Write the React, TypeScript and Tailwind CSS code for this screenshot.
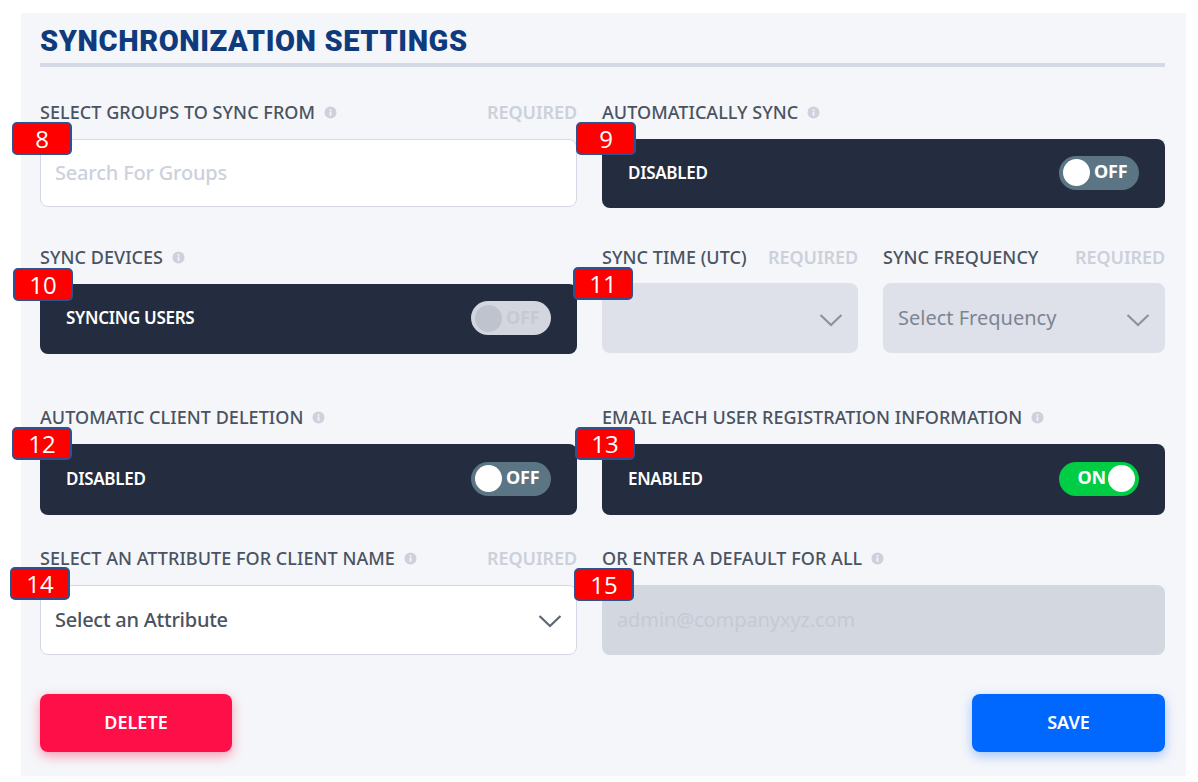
import type { ReactNode } from 'react';

function InfoIcon() {
    return (
        <svg width="13" height="13" viewBox="0 0 13 13" className="shrink-0">
            <circle cx="6.5" cy="6.5" r="6" fill="#ccd1dc" />
            <rect x="5.6" y="5.6" width="1.8" height="4.2" fill="#f5f6fa" />
            <rect x="5.6" y="3.1" width="1.8" height="1.6" fill="#f5f6fa" />
        </svg>
    );
}

function Chevron({ color, className }: { color: string; className?: string }) {
    return (
        <svg width="24" height="14" viewBox="0 0 24 14" fill="none" className={`shrink-0 ${className ?? ''}`}>
            <path d="M1.5 2L12 12L22.5 2" stroke={color} strokeWidth="2.2" />
        </svg>
    );
}

function Badge({ n, className }: { n: number; className: string }) {
    return (
        <div className={`absolute z-10 flex h-[33px] w-[60px] items-center justify-center rounded-[5px] border-2 border-[#2f528f] bg-[#ff0000] font-['Open_Sans',sans-serif] text-[24px] leading-none text-white ${className}`}>
            {n}
        </div>
    );
}

function FieldLabel({ text, info, required }: { text: string; info?: boolean; required?: boolean }) {
    return (
        <div className="flex h-[26px] items-center justify-between whitespace-nowrap text-[18px] font-medium tracking-[0.05px]">
            <div className="flex items-center gap-[9px] text-[#4a5361]">
                <span>{text}</span>
                {info && <InfoIcon />}
            </div>
            {required && <span className="font-semibold tracking-[-0.1px] text-[#ccd0da]">REQUIRED</span>}
        </div>
    );
}

function Toggle({ state }: { state: 'off' | 'on' | 'locked' }) {
    if (state === 'on') {
        return (
            <div className="flex h-[34px] w-[80px] items-center justify-end gap-[2px] rounded-full bg-[#00cc44] pr-[4px] text-[18px] font-bold tracking-[-0.2px] text-white">
                <span className="mb-[2px]">ON</span>
                <div className="h-[27px] w-[27px] rounded-full bg-white" />
            </div>
        );
    }
    const locked = state === 'locked';
    return (
        <div className={`flex h-[34px] w-[80px] items-center gap-[4px] rounded-full pl-[4px] text-[18px] font-bold tracking-[-0.2px] ${locked ? 'bg-[#d3d6df] text-[#c5c9d4]' : 'bg-[#5b7585] text-white'}`}>
            <div className={`h-[27px] w-[27px] rounded-full ${locked ? 'bg-[#bfc3ce]' : 'bg-white'}`} />
            <span className="mb-[2px]">OFF</span>
        </div>
    );
}

function DarkBox({ label, toggle, className }: { label: string; toggle: 'off' | 'on' | 'locked'; className: string }) {
    return (
        <div className={`mt-[14px] flex items-center justify-between rounded-[8px] bg-[#232d3f] pb-[2px] pl-[26px] pr-[26px] text-[17px] font-semibold tracking-[-0.3px] text-white ${className}`}>
            <span>{label}</span>
            <Toggle state={toggle} />
        </div>
    );
}

function Field({ children, className }: { children: ReactNode; className?: string }) {
    return <div className={`relative min-w-0 ${className ?? ''}`}>{children}</div>;
}

export default function App() {
    return (
        <div className="h-[782px] w-[1198px] overflow-hidden bg-white pl-[21px] pr-[12px] pt-[13px] font-['Noto_Sans',sans-serif]">
            <div className="h-[763px] bg-[#f5f6fa] pl-[19px] pr-[21px] pt-[12px]">
                <div className="border-b-4 border-[#d5d9e5] pb-[6px]">
                    <h1 className="font-['Roboto',sans-serif] text-[29px] font-black leading-[32px] tracking-[0.6px] text-[#0f3b7d]">
                        SYNCHRONIZATION SETTINGS
                    </h1>
                </div>

                <div className="mt-[32px] grid grid-cols-[537px_563px] gap-x-[25px]">
                    <Field>
                        <FieldLabel text="SELECT GROUPS TO SYNC FROM" info required />
                        <Badge n={8} className="left-[-28px] top-[23px]" />
                        <div className="mt-[14px] flex h-[68px] items-center rounded-[8px] border border-[#d5d9e5] bg-white pl-[14px] text-[20px] font-medium tracking-[-0.2px] text-[#ccd1dc]">
                            Search For Groups
                        </div>
                    </Field>
                    <Field>
                        <FieldLabel text="AUTOMATICALLY SYNC" info />
                        <Badge n={9} className="left-[-26px] top-[23px]" />
                        <DarkBox label="DISABLED" toggle="off" className="h-[69px]" />
                    </Field>
                </div>

                <div className="mt-[36px] grid grid-cols-[537px_563px] gap-x-[25px]">
                    <Field>
                        <FieldLabel text="SYNC DEVICES" info />
                        <Badge n={10} className="left-[-27px] top-[24px]" />
                        <DarkBox label="SYNCING USERS" toggle="locked" className="h-[70px]" />
                    </Field>
                    <Field className="grid grid-cols-[256px_282px] gap-x-[25px]">
                        <div>
                            <FieldLabel text="SYNC TIME (UTC)" required />
                            <div className="mt-[13px] flex h-[70px] items-center justify-end rounded-[8px] bg-[#dee1e9] pr-[15px]">
                                <Chevron color="#8a93a1" className="mt-[3px]" />
                            </div>
                        </div>
                        <div>
                            <FieldLabel text="SYNC FREQUENCY" required />
                            <div className="mt-[13px] flex h-[70px] items-center justify-between rounded-[8px] bg-[#dee1e9] pl-[15px] pr-[15px] text-[20px] text-[#7c8594]">
                                <span>Select Frequency</span>
                                <Chevron color="#8a93a1" className="mt-[3px]" />
                            </div>
                        </div>
                        <Badge n={11} className="left-[-29px] top-[23px]" />
                    </Field>
                </div>

                <div className="mt-[50px] grid grid-cols-[537px_563px] gap-x-[25px]">
                    <Field>
                        <FieldLabel text="AUTOMATIC CLIENT DELETION" info />
                        <Badge n={12} className="left-[-28px] top-[23px]" />
                        <DarkBox label="DISABLED" toggle="off" className="h-[71px]" />
                    </Field>
                    <Field>
                        <FieldLabel text="EMAIL EACH USER REGISTRATION INFORMATION" info />
                        <Badge n={13} className="left-[-27px] top-[23px]" />
                        <DarkBox label="ENABLED" toggle="on" className="h-[71px]" />
                    </Field>
                </div>

                <div className="mt-[30px] grid grid-cols-[537px_563px] gap-x-[25px]">
                    <Field>
                        <FieldLabel text="SELECT AN ATTRIBUTE FOR CLIENT NAME" info required />
                        <Badge n={14} className="left-[-30px] top-[22px]" />
                        <div className="mt-[14px] flex h-[70px] items-center justify-between rounded-[8px] border border-[#d5d9e5] bg-white pl-[14px] pr-[14px] text-[20px] font-medium tracking-[-0.25px] text-[#4a5361]">
                            <span>Select an Attribute</span>
                            <Chevron color="#5b6778" className="mt-[1px]" />
                        </div>
                    </Field>
                    <Field>
                        <FieldLabel text="OR ENTER A DEFAULT FOR ALL" info />
                        <Badge n={15} className="left-[-28px] top-[23px]" />
                        <div className="mt-[14px] flex h-[70px] items-center rounded-[8px] bg-[#d3d7e0] pl-[15px] text-[20px] tracking-[-0.1px] text-[#c5cad5]">
                            admin@companyxyz.com
                        </div>
                    </Field>
                </div>

                <div className="mt-[39px] flex justify-between">
                    <button className="h-[58px] w-[192px] rounded-[8px] bg-[#ff0f47] pb-[2px] text-[18px] font-semibold text-white shadow-[0_4px_12px_rgba(255,15,71,0.4)]">
                        DELETE
                    </button>
                    <button className="h-[58px] w-[193px] rounded-[8px] bg-[#0068ff] pb-[2px] text-[18px] font-semibold text-white shadow-[0_4px_12px_rgba(0,104,255,0.35)]">
                        SAVE
                    </button>
                </div>
            </div>
        </div>
    );
}
